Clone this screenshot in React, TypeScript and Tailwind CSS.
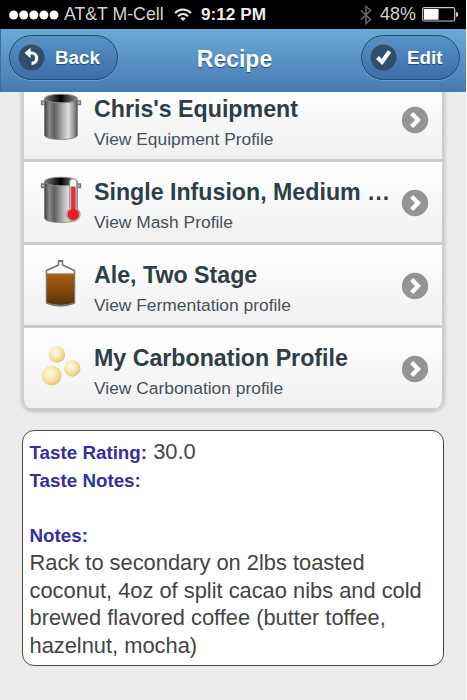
import type { ReactNode } from "react";

interface Profile {
  title: string;
  subtitle: string;
  icon: ReactNode;
}

const KettleBody = () => (
  <>
    <defs>
      <linearGradient id="steel">
        <stop offset="0" stopColor="#3c3c3c" />
        <stop offset=".14" stopColor="#8b8b8b" />
        <stop offset=".3" stopColor="#5f5f5f" />
        <stop offset=".52" stopColor="#a5a5a5" />
        <stop offset=".72" stopColor="#dedede" />
        <stop offset=".88" stopColor="#989898" />
        <stop offset="1" stopColor="#555" />
      </linearGradient>
      <linearGradient id="opening">
        <stop offset="0" stopColor="#777" />
        <stop offset=".35" stopColor="#222" />
        <stop offset=".5" stopColor="#000" />
        <stop offset=".65" stopColor="#333" />
        <stop offset="1" stopColor="#888" />
      </linearGradient>
    </defs>
    <path d="M4.5 8H1.5v3.500h3M37.500 8h3v3.500h-3" fill="#bbb" stroke="#777" strokeWidth="1.3" />
    <path d="M4.500 6v36c0 6 33 6 33 0V6z" fill="url(#steel)" stroke="#777" strokeWidth=".7" />
    <ellipse cx="21" cy="5.500" rx="16.500" ry="4.300" fill="url(#opening)" stroke="#888" strokeWidth="1" />
  </>
);

const Kettle = () => (
  <svg width="42" height="49" viewBox="0 0 42 49">
    <KettleBody />
  </svg>
);

const MashKettle = () => (
  <svg width="42" height="49" viewBox="0 0 42 49">
    <KettleBody />
    <path
      d="M29.500 6c0-4.500 7.500-4.500 7.500 0v26.500a7 7 0 1 1-7.500 0z"
      fill="#b5b5b5"
      stroke="#999"
      strokeWidth=".8"
    />
    <path d="M30.500 11V6c0-3.500 5.500-3.500 5.500 0v5z" fill="#fff" />
    <path d="M31.200 10.500h4.200v24h-4.200z" fill="#ef2b38" />
    <circle cx="33.300" cy="38.500" r="5.700" fill="#f01822" />
  </svg>
);

const Fermenter = () => (
  <svg width="42" height="49" viewBox="0 0 42 49">
    <defs>
      <linearGradient id="beer" x1="0" y1="0" x2="0" y2="1">
        <stop offset="0" stopColor="#a9621c" />
        <stop offset=".5" stopColor="#87490d" />
        <stop offset="1" stopColor="#5b3108" />
      </linearGradient>
    </defs>
    <path
      d="M18.500 2h4v4l12 5.500v32.500c-9 3.700-19 3.700-28 0V11.500L18.500 6z"
      fill="#f8f8f8"
      stroke="#777"
      strokeWidth="1.500"
      strokeLinejoin="round"
    />
    <path d="M7 14.500h27v29c-8 3.200-19 3.200-27 0z" fill="url(#beer)" />
    <path d="M18 1.700h5" stroke="#666" strokeWidth="1.600" />
  </svg>
);

const Bubbles = () => (
  <svg width="42" height="49" viewBox="0 0 42 49">
    <defs>
      <radialGradient id="bubble" cx=".4" cy=".38" r=".62">
        <stop offset="0" stopColor="#fffbe8" />
        <stop offset=".45" stopColor="#fceabb" />
        <stop offset=".8" stopColor="#f2d591" />
        <stop offset="1" stopColor="#dfc58e" />
      </radialGradient>
    </defs>
    <circle cx="17" cy="12.500" r="8.200" fill="url(#bubble)" />
    <circle cx="11.500" cy="33.500" r="10" fill="url(#bubble)" />
    <circle cx="32.300" cy="26.500" r="8.200" fill="url(#bubble)" />
  </svg>
);

const profiles: Profile[] = [
  { title: "Chris's Equipment", subtitle: "View Equipment Profile", icon: <Kettle /> },
  { title: "Single Infusion, Medium …", subtitle: "View Mash Profile", icon: <MashKettle /> },
  { title: "Ale, Two Stage", subtitle: "View Fermentation profile", icon: <Fermenter /> },
  { title: "My Carbonation Profile", subtitle: "View Carbonation profile", icon: <Bubbles /> },
];

const StatusBar = () => (
  <div className="flex h-[29px] items-center bg-black pl-[9px] pr-[7px] text-[#d2d2d2]">
    <svg width="50" height="10" viewBox="0 0 50 10" fill="#fff">
      {[4.6, 14.7, 24.8, 34.900, 45].map((cx) => (
        <circle key={cx} cx={cx} cy="5" r="4.500" />
      ))}
    </svg>
    <span className="ml-[5px] w-[101px] whitespace-nowrap text-[17.700px] leading-[31px]">AT&amp;T M-Cell</span>
    <svg className="ml-[9px]" width="18" height="14" viewBox="0 0 18 14" fill="none" stroke="#ececec" strokeWidth="2.200">
      <path d="M1 5c4.700-4.700 11.300-4.700 16 0" />
      <path d="M4 8.300c3-2.900 7-2.900 10 0" />
      <path d="M6.300 10.300c1.700-1.500 3.700-1.500 5.400 0L9 13z" fill="#ececec" stroke="none" />
    </svg>
    <span className="ml-[9px] whitespace-nowrap text-[17.200px] font-bold leading-[31px] text-[#ededed]">9:12 PM</span>
    <svg className="ml-auto" width="12" height="20" viewBox="0 0 12 20" fill="none" stroke="#686868" strokeWidth="1.500">
      <path d="M1 5.500l9.500 9L6 18.500v-17l4.500 4-9.500 9" />
    </svg>
    <span className="ml-[8px] w-[37px] whitespace-nowrap text-[17.900px] leading-[31px]">48%</span>
    <svg className="ml-[5px]" width="37" height="15" viewBox="0 0 37 15">
      <rect x=".7" y=".7" width="32" height="13.300" rx="1.500" fill="none" stroke="#c8c8c8" strokeWidth="1.200" />
      <rect x="2" y="2" width="14.500" height="10.700" fill="#fff" />
      <path d="M34 5c3 0 3 5 0 5z" fill="#c8c8c8" />
    </svg>
  </div>
);

const buttonClass =
  "flex h-[45px] items-center rounded-full border border-[#145072] bg-linear-to-b from-[#5994c5] to-[#3c6da9] text-[18.800px] font-bold text-white shadow-[0_1px_0_rgba(255,255,255,0.2)] [text-shadow:0_1px_1px_#194b7e]";

const Header = () => (
  <header className="flex h-[63px] items-start border-l border-[#3e6e9d] bg-linear-to-b from-[#6caad6] to-[#467ab2] pl-[8px] pr-[6px] pt-[6px]">
    <button className={`${buttonClass} w-[109px] pl-[8px]`}>
      <svg width="27" height="27" viewBox="0 0 27 27">
        <circle cx="13.500" cy="13.500" r="13" fill="#304f6d" />
        <path d="M8 9h5.500a5.200 5.200 0 0 1 0 10.400" fill="none" stroke="#fff" strokeWidth="3.200" />
        <path d="M12.500 3.800v10.400L6.500 9z" fill="#fff" />
      </svg>
      <span className="ml-[10px] pt-[2px]">Back</span>
    </button>
    <h1 className="flex-1 pr-[10px] pt-[7px] text-center text-[23px] font-bold leading-[34px] text-white [text-shadow:0_1px_1px_#194b7e]">
      Recipe
    </h1>
    <button className={`${buttonClass} w-[99px] pl-[8px]`}>
      <svg width="27" height="27" viewBox="0 0 27 27">
        <circle cx="13.500" cy="13.500" r="13" fill="#304f6d" />
        <path d="M7.500 13.500l4.500 4.500L19.500 7.500" fill="none" stroke="#fff" strokeWidth="4" />
      </svg>
      <span className="ml-[10px] pt-[2px]">Edit</span>
    </button>
  </header>
);

const ProfileRow = ({ title, subtitle, icon }: Profile) => (
  <li className="flex h-[83px] items-start border-b-[3px] border-[#cbcbcb] bg-linear-to-b from-white to-[#f0f0f0] pl-[16px] pr-[13px] last:h-[82px] last:border-b-2">
    <div className="mt-[14px] w-[42px] shrink-0">{icon}</div>
    <div className="ml-[12px] flex-1 whitespace-nowrap pt-[16px] text-[#2f3e46]">
      <h2 className="text-[23.200px] font-bold leading-[29px]">{title}</h2>
      <p className="mt-[4px] text-[17.400px] leading-[22px] text-[#465159]">{subtitle}</p>
    </div>
    <svg className="mt-[26.500px] shrink-0" width="28" height="28" viewBox="0 0 28 28">
      <circle cx="14" cy="14" r="13.200" fill="#949494" />
      <path d="M10.700 7.500l6.300 6.500-6.300 6.500" fill="none" stroke="#fff" strokeWidth="4.300" />
    </svg>
  </li>
);

const labelClass = "text-[18.800px] leading-none text-[#34309f]";

export default function App() {
  return (
    <div className="flex h-[700px] w-[467px] flex-col overflow-hidden border-r border-[#f5f5f5] bg-[#ececec] font-['Liberation_Sans',Arial,sans-serif]">
      <StatusBar />
      <Header />
      <main className="flex-1 overflow-hidden px-[22px]">
        {/* list is scrolled so the first row sits partly under the header */}
        <ul className="-mt-[13px] overflow-hidden rounded-b-[12px] border-x-2 border-[#cecece] shadow-[0_1px_4px_rgba(0,0,0,0.28)]">
          {profiles.map((profile) => (
            <ProfileRow key={profile.title} {...profile} />
          ))}
        </ul>
        <section className="mt-[20px] h-[236px] whitespace-nowrap rounded-[12px] border-[1.500px] border-[#494949] bg-white pl-[6.500px] pt-[7px] text-[21.850px] leading-[27.700px] text-[#444]">
          <p>
            <b className={labelClass}>Taste Rating:</b> 30.0
          </p>
          <p>
            <b className={labelClass}>Taste Notes:</b>
          </p>
          <br />
          <p>
            <b className={labelClass}>Notes:</b>
          </p>
          <p>
            Rack to secondary on 2lbs toasted
            <br />
            coconut, 4oz of split cacao nibs and cold
            <br />
            brewed flavored coffee (butter toffee,
            <br />
            hazelnut, mocha)
          </p>
        </section>
      </main>
    </div>
  );
}
